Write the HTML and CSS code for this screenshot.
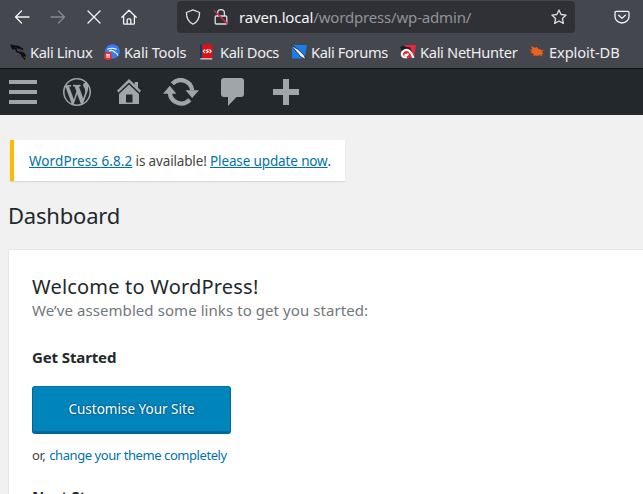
FILE: index.html
```
<!DOCTYPE html>
<html lang="en-GB">
<head>
<meta charset="utf-8">
<title>Dashboard</title>
<link rel="stylesheet" href="styles.css">
</head>
<body>
<header class="browser">
  <div class="toolbar">
    <svg class="nav back" viewBox="0 0 16 16"><path d="M15 8H1.5M7.5 2 1.5 8l6 6"/></svg>
    <svg class="nav forward" viewBox="0 0 16 16"><path d="M1 8h13.500M8.500 2l6 6-6 6"/></svg>
    <svg class="nav stop" viewBox="0 0 16 16"><path d="M2 2l12 12M14 2 2 14"/></svg>
    <svg class="nav home" viewBox="0 0 16 16"><path d="M.8 8.300 8 1.300l7.200 7M2.600 7v7.200q0 1 1 1h8.800q1 0 1-1V7M6.200 15v-4.200q0-1 1-1h1.600q1 0 1 1V15"/></svg>
    <div class="address">
      <svg class="shield" viewBox="0 0 16 16"><path d="M8 .9 14.600 3.500C14.600 9 12.200 13.200 8 15.200 3.800 13.200 1.400 9 1.400 3.500z"/></svg>
      <svg class="lock" viewBox="0 0 16 16"><path d="M4.600 7V4a3.400 3.400 0 0 1 6.800 0v3M3.200 7h9.600q1 0 1 1v6q0 1-1 1H3.200q-1 0-1-1V8q0-1 1-1z"/><path class="slash" d="M1 1.500 15 15.200"/></svg>
      <span class="url"><b>raven.local</b>/wordpress/wp-admin/</span>
      <svg class="star" viewBox="0 0 16 16"><path d="M8 1l2.100 4.500 5 .6-3.700 3.400 1 4.900L8 12l-4.400 2.400 1-4.900L.9 6.100l5-.6z"/></svg>
    </div>
    <svg class="nav pocket" viewBox="0 0 16 16"><path d="M2.300 2.300h11.400q1.300 0 1.300 1.300V7.500a7 6.500 0 0 1-14 0V3.600q0-1.300 1.300-1.300zM4.700 6.300 8 9.400l3.300-3.100"/></svg>
  </div>
  <nav class="bookmarks">
    <a class="mark linux"><svg viewBox="0 0 16 16"><path class="ink" d="M.5.800Q3 2.500 6 2.200q4 .3 5.500 2.600-3-1.500-6.500-.6L2 5M1 3.200l4-.4M11.500 4.500 13 5.800M6 4.500q-.5 3 2.500 3.800 4-.3 5.500 1.500l1.500 2.200-3-1.500M9 8.500q3 .5 3 3.300 1.500 1.500 3 3.500"/></svg><span>Kali Linux</span></a>
    <a class="mark tools"><svg viewBox="0 0 16 16"><circle cx="8.500" cy="7.500" r="7.300" fill="#367bf0"/><path d="M3.500 5.200q5-2 9 .2M5 7q4-2 6 1.500 2 .5 3 3" fill="none" stroke="#fff" stroke-width="1.200"/><circle cx="4" cy="12" r="4" fill="#e92f32"/><path d="M2 10.700h4M3.100 10.700v3.200M5 10.700v3.200" stroke="#fff" fill="none"/></svg><span>Kali Tools</span></a>
    <a class="mark docs"><svg viewBox="0 0 16 16"><path d="M0 .500h2v14H0z" fill="#173765"/><path d="M2 .500h10.500v13.500H2z" fill="#db1015"/><path d="M.3 14.200h12v1.300H.3z" fill="#d8d8d8"/><path d="M5 5.500 3.200 7.300 5 9M8.500 5.500 6.300 6.300l2 1.500L6.200 9M9.500 5.500l1.700 1.800L9.500 9" fill="none" stroke="#fff" stroke-width="1.100"/></svg><span>Kali Docs</span></a>
    <a class="mark forums"><svg viewBox="0 0 16 16"><path d="M1 1h15l-2.500 13.500H1z" fill="#187eed"/><path d="M0 1 5 3.500l8 7.500 2 4.500-5-2.500-6-7z" fill="#f2f2f2" stroke="#17252c" stroke-width=".8"/><path d="M2 2l4 3" stroke="#303840" fill="none"/></svg><span>Kali Forums</span></a>
    <a class="mark hunter"><svg viewBox="0 0 16 16"><path d="M4 1h12l-2 13H2z" fill="#e62936"/><path d="M0 3l4-1.500L6 3l4 .5L15 14l-3-2-1.500-4L7 6 2 7z" fill="#172026"/><path d="M7 13.500 3.500 13Q.3 10.500 3 7.500q3-2.800 6.300-.6 2.500 2 4.200 7M4.500 10.800q2.700 1 3.700-1.300" fill="none" stroke="#fff" stroke-width="2.200"/></svg><span>Kali NetHunter</span></a>
    <a class="mark exploit"><svg viewBox="0 0 16 16"><path d="M2 2l4 2 1.500-1.300L9 4.500l3 1.500 3-.2-2 1.700 1.500 2.500-2-.3 1 3-2.500-1.700-2 1-2-.5-3 .5 1-1.500-2-1.500-2-.5 2-1L.5 5.500l3 .2z" fill="#ed611b"/></svg><span>Exploit-DB</span></a>
  </nav>
</header>
<div class="adminbar">
  <svg class="menu" viewBox="0 0 28 24"><path d="M0 0h28v4H0zM0 10h28v4H0zM0 20h28v4H0z"/></svg>
  <svg class="wp" viewBox="0 0 20 20"><path d="M20 10c0-5.510-4.490-10-10-10C4.480 0 0 4.490 0 10c0 5.520 4.480 10 10 10 5.510 0 10-4.480 10-10zM7.780 15.370L4.370 6.220c.55-.02 1.170-.08 1.170-.08.5-.06.44-1.130-.06-1.110 0 0-1.450.11-2.370.11-.18 0-.37 0-.58-.01C4.120 2.690 6.870 1.110 10 1.110c2.330 0 4.450.87 6.050 2.340-.68-.11-1.650.39-1.650 1.580 0 .74.45 1.360.9 2.100.35.61.55 1.360.55 2.460 0 1.490-1.400 5-1.400 5l-3.030-8.370c.54-.02.82-.17.82-.17.5-.05.44-1.250-.06-1.220 0 0-1.440.12-2.380.12-.87 0-2.330-.12-2.330-.12-.5-.03-.56 1.200-.06 1.220l.92.08 1.260 3.410zM17.410 10c.24-.64.74-1.870.43-4.250.7 1.290 1.050 2.710 1.050 4.250 0 3.290-1.730 6.240-4.400 7.780.97-2.590 1.940-5.200 2.920-7.780zM6.100 18.090C3.120 16.650 1.110 13.530 1.110 10c0-1.300.23-2.480.72-3.590C3.250 10.300 4.670 14.200 6.100 18.090zm4.030-6.630l2.580 6.980c-.86.29-1.760.45-2.710.45-.79 0-1.570-.11-2.290-.33.81-2.380 1.620-4.740 2.420-7.100z"/></svg>
  <svg class="site" viewBox="0 0 24 26"><path d="M12 0l5.700 5.500V3H21v5.800l3 3-1.500 1.600L12 3.400 1.500 13.400 0 11.800z"/><path fill-rule="evenodd" d="M12 5.500l10 9.500v10H2V15zM9 15.500v8h6.500v-8z"/></svg>
  <svg class="updates" viewBox="0 0 36 28"><path class="arc" d="M9.300 5.700A11.600 11.600 0 0 1 29.200 12.300M26.800 21.800A11.600 11.600 0 0 1 6.800 14.500"/><path d="M22.500 12.300H36L29.200 20zM0 15.700 6.800 7.800l6.600 7.900z"/></svg>
  <svg class="comments" viewBox="0 0 23 28"><path d="M3 0h17q3 0 3 3v13q0 3-3 3h-4.500L7 28v-9H3q-3 0-3-3V3q0-3 3-3z"/></svg>
  <svg class="new" viewBox="0 0 26 26"><path d="M10 0h6v10h10v6H16v10h-6V16H0v-6h10z"/></svg>
</div>
<main class="content">
  <div class="notice"><a class="ver">WordPress 6.8.2</a><span class="avail"> is available! </span><a class="upd">Please update now</a>.</div>
  <h1><span>Dashboard</span></h1>
  <section class="welcome">
    <h2><span>Welcome to WordPress!</span></h2>
    <p class="about"><span>We’ve assembled some links to get you started:</span></p>
    <h3><span>Get Started</span></h3>
    <a class="button"><span>Customise Your Site</span></a>
    <p class="theme"><span>or, <a>change your theme completely</a></span></p>
    <h3 class="next"><span>Next Steps</span></h3>
  </section>
</main>
</body>
</html>
```
FILE: styles.css
```
* { box-sizing: border-box; }
html, body { height: 100%; overflow: hidden; }
body { display: flex; flex-direction: column; margin: 0; background: #f1f1f1; color: #444; font-family: "Noto Sans", sans-serif; font-size: 13px; }
svg { display: block; flex: none; }
span { white-space: pre; }
h1, h2, h3, p { margin: 0; font-weight: 400; }

.browser { flex: none; height: 69px; background: #45474f; border-bottom: 1px solid #101216; }
.toolbar { display: flex; align-items: center; height: 34px; padding-left: 14px; }
.nav { width: 16px; height: 16px; fill: none; stroke: #f4f4f5; stroke-width: 1.3; stroke-linecap: round; stroke-linejoin: round; }
.forward { margin-left: 20px; stroke: #87898e; }
.stop { margin-left: 20px; }
.home { margin-left: 19px; }
.address { display: flex; align-items: center; width: 398px; height: 32px; margin-left: 40px; padding: 0 8px; border-radius: 4px; background: #303136; }
.address svg { width: 16px; height: 16px; fill: none; stroke: #dedee0; stroke-width: 1.3; stroke-linejoin: round; }
.address .lock { margin-left: 12px; }
.address .slash { stroke: #e3224f; stroke-width: 1.5; }
.url { margin-left: 10px; color: #929398; font-size: 15px; letter-spacing: -.17px; }
.url b { color: #f4f4f5; font-weight: 400; }
.address .star { margin-left: auto; }
.pocket { margin-left: 39px; }

.bookmarks { display: flex; height: 34px; padding: 2px 0 0 10px; color: #eeeef0; font-size: 14.67px; letter-spacing: -.37px; }
.mark { display: flex; align-items: center; gap: 4px; flex: none; }
.mark svg { width: 16px; height: 16px; }
.ink { fill: none; stroke: #0c0c0d; stroke-width: 1.4; }
.linux { width: 94px; }
.tools { width: 96px; letter-spacing: -.2px; }
.docs { width: 91px; }
.forums { width: 109px; }
.hunter { width: 129px; letter-spacing: -.32px; }
.exploit { letter-spacing: -.1px; }

.adminbar { display: flex; flex: none; align-items: center; height: 46px; padding-left: 9px; background: #23282d; fill: #a0a5aa; }
.menu { width: 28px; height: 24px; }
.wp { width: 28px; height: 28px; margin-left: 26px; }
.site { width: 24px; height: 26px; margin-left: 26px; }
.updates { width: 36px; height: 28px; margin-left: 22px; }
.arc { fill: none; stroke: #a0a5aa; stroke-width: 4.3; }
.comments { width: 23px; height: 28px; margin-left: 22px; }
.new { width: 26px; height: 26px; margin-left: 29px; }

.content { flex: 1; min-height: 0; padding: 25px 0 0 8px; overflow: hidden; }
.notice { width: 335px; height: 41px; margin-left: 2px; padding-left: 15px; border-left: 4px solid #ffb900; background: #fff; box-shadow: 0 1px 1px rgba(0,0,0,.1); font-size: 13.5px; line-height: 42px; white-space: nowrap; }
.notice a { color: #0073aa; text-decoration: underline; }
.ver { letter-spacing: .08px; }
.avail { letter-spacing: -.15px; }
.upd { letter-spacing: -.13px; }
h1 { height: 68px; color: #23282d; font-size: 22px; letter-spacing: -.2px; line-height: 69px; }
.welcome { height: 246px; margin-right: -10px; padding: 22px 23px 0; border: 1px solid #e5e5e5; border-bottom: 0; background: #fff; box-shadow: 0 1px 1px rgba(0,0,0,.04); }
h2 { height: 28px; color: #23282d; font-size: 20px; letter-spacing: .2px; line-height: 29px; }
.about { height: 20px; color: #72777c; font-size: 15px; letter-spacing: .07px; line-height: 20px; }
h3 { height: 24px; margin-top: 25px; color: #23282d; font-size: 15px; font-weight: 700; letter-spacing: -.12px; line-height: 24px; }
.button { display: flex; align-items: center; justify-content: center; width: 199px; height: 48px; margin-top: 17px; padding-bottom: 2px; border: 1px solid #006799; border-top-color: #0073aa; border-bottom-width: 2px; border-radius: 3px; background: #0085ba; box-shadow: inset 0 -1px 0 #006799; color: #fff; font-size: 13.5px; text-shadow: 0 -1px 1px #006799, 1px 0 1px #006799, 0 1px 1px #006799, -1px 0 1px #006799; }
.theme { height: 20px; margin-top: 11px; letter-spacing: -.43px; line-height: 20px; }
.theme > span { margin-right: auto; }
.theme a { margin-left: 1px; color: #0073aa; }
.next { margin-top: 19px; }
```
